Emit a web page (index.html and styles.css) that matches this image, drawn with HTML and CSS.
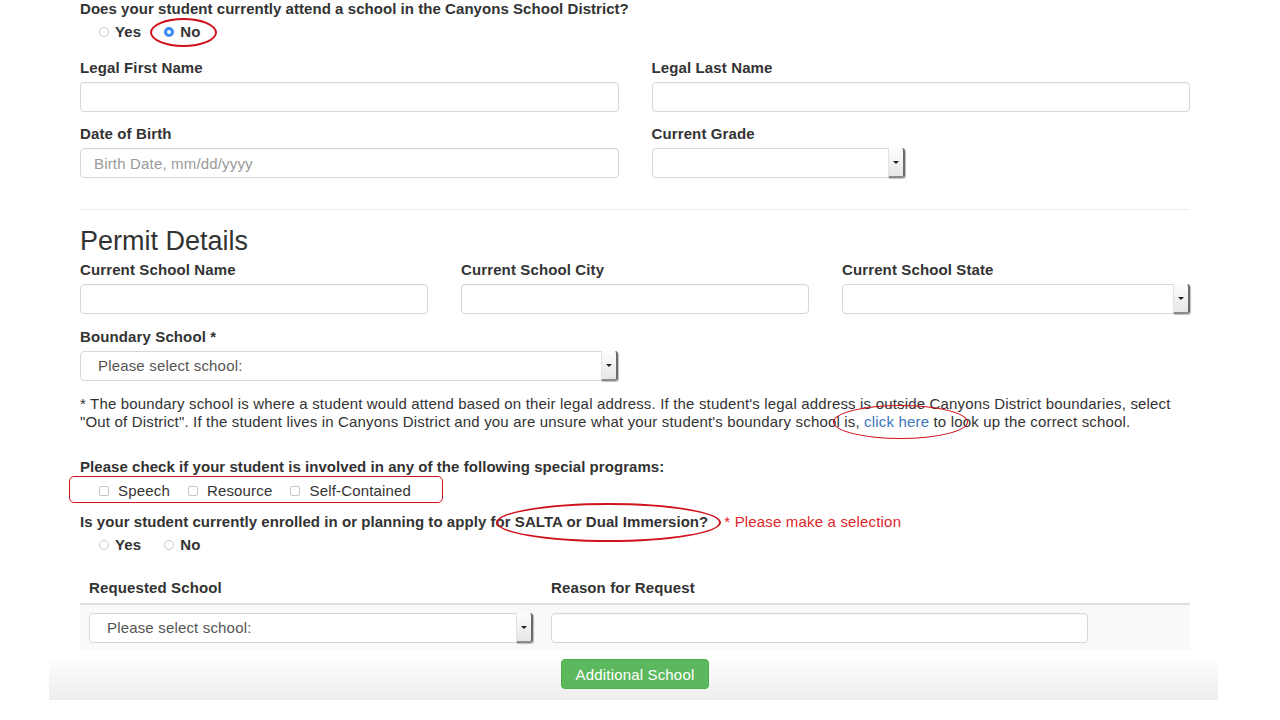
FILE: index.html
```html
<!DOCTYPE html>
<html>
<head>
<meta charset="utf-8">
<title>Permit Request</title>
<link rel="stylesheet" href="styles.css">
</head>
<body>
<div class="panel">
  <div class="q">Does your student currently attend a school in the Canyons School District?</div>
  <div class="radios">
    <label class="opt"><span class="radio"></span>Yes</label>
    <label class="opt"><span class="radio on"></span>No</label>
  </div>

  <div class="row2 first">
    <div class="field"><div class="lbl">Legal First Name</div><input class="input" type="text"></div>
    <div class="field"><div class="lbl">Legal Last Name</div><input class="input" type="text"></div>
  </div>
  <div class="row2 second">
    <div class="field"><div class="lbl">Date of Birth</div><input class="input" type="text" placeholder="Birth Date, mm/dd/yyyy"></div>
    <div class="field"><div class="lbl">Current Grade</div>
      <div class="select grade"><span class="val"></span><span class="arrow"><i></i></span></div>
    </div>
  </div>

  <div class="rule"></div>
  <h2>Permit Details</h2>

  <div class="row3">
    <div class="field"><div class="lbl">Current School Name</div><input class="input" type="text"></div>
    <div class="field"><div class="lbl">Current School City</div><input class="input" type="text"></div>
    <div class="field"><div class="lbl">Current School State</div>
      <div class="select"><span class="val"></span><span class="arrow"><i></i></span></div>
    </div>
  </div>

  <div class="boundary">
    <div class="lbl">Boundary School *</div>
    <div class="select half"><span class="val">Please select school:</span><span class="arrow"><i></i></span></div>
  </div>

  <p class="note">* The boundary school is where a student would attend based on their legal address. If the student's legal address is outside Canyons District boundaries, select<br>"Out of District". If the student lives in Canyons District and you are unsure what your student's boundary school is, <a href="#">click here</a> to look up the correct school.</p>

  <div class="q programs">Please check if your student is involved in any of the following special programs:</div>
  <div class="checks">
    <label class="chk"><span class="box"></span>Speech</label>
    <label class="chk"><span class="box"></span>Resource</label>
    <label class="chk"><span class="box"></span>Self-Contained</label>
  </div>

  <div class="q salta">Is your student currently enrolled in or planning to apply for SALTA or Dual Immersion?<span class="err">* Please make a selection</span></div>
  <div class="radios">
    <label class="opt"><span class="radio"></span>Yes</label>
    <label class="opt"><span class="radio"></span>No</label>
  </div>

  <table class="req">
    <thead>
      <tr><th class="c1">Requested School</th><th>Reason for Request</th></tr>
    </thead>
    <tbody>
      <tr>
        <td class="c1"><div class="select"><span class="val">Please select school:</span><span class="arrow"><i></i></span></div></td>
        <td><input class="input reason" type="text"></td>
      </tr>
    </tbody>
  </table>

  <button class="btn">Additional School</button>
</div>

<div class="mark m-no"></div>
<div class="mark m-click"></div>
<div class="mark m-checks"></div>
<div class="mark m-salta"></div>
</body>
</html>
```

FILE: styles.css
```css
* { box-sizing: border-box; }
html, body { margin: 0; background: #fff; }
body {
  font-family: "Liberation Sans", Arial, Helvetica, sans-serif;
  color: #333;
  font-size: 15px;
  line-height: 18px;
  letter-spacing: 0.17px;
}

.panel {
  margin: 0 62px 0 49px;
  padding: 0 28px 11px 31px;
  background: linear-gradient(to bottom, #fff 0, #fff calc(100% - 44px), #ededed 100%);
}

.lbl, .opt, .req th { letter-spacing: 0.12px; }
.q { font-weight: bold; letter-spacing: 0.05px; }

.radios {
  margin-top: 5px;
  display: flex;
  padding-left: 19px;
  gap: 23px;
  height: 18px;
}
.opt { display: flex; align-items: center; font-weight: bold; }
.radio {
  width: 10px; height: 10px;
  border-radius: 50%;
  border: 1px solid #c9c9c9;
  background: #fff;
  margin-right: 6px;
}
.radio.on { border: 3px solid #3a8bef; }

.row2 {
  display: grid;
  grid-template-columns: 1fr 1fr;
  column-gap: 33px;
}
.row2.first { margin-top: 18px; }
.row2.second { margin-top: 13px; }

.lbl { font-weight: bold; margin-bottom: 5px; }

.input {
  display: block;
  width: 100%;
  height: 30px;
  margin: 0;
  border: 1px solid #d7d7d7;
  border-radius: 4px;
  background: #fff;
  box-shadow: inset 0 1px 1px rgba(0,0,0,0.04);
  font: 15px "Liberation Sans", Arial, sans-serif;
  letter-spacing: 0.17px;
  color: #555;
  padding: 0 13px;
  outline: none;
}
.input::placeholder { color: #9a9a9a; }

.select {
  height: 30px;
  border: 1px solid #d7d7d7;
  border-radius: 4px;
  background: #fff;
  display: flex;
  align-items: stretch;
  color: #555;
}
.select .val { flex: 1; display: flex; align-items: center; padding-left: 17px; }
.select .arrow {
  width: 17px;
  margin: -1px -1px -1px 0;
  background: linear-gradient(to bottom, #fdfdfd, #e6e6e6);
  border-left: 1px solid #e2e2e2;
  border-right: 2px solid #6b6b6b;
  border-bottom: 2px solid #8a8a8a;
  border-radius: 0 3px 3px 0;
  box-shadow: 1px 1px 1px rgba(0,0,0,0.25);
  display: flex;
  align-items: center;
  justify-content: center;
}
.select .arrow i {
  width: 0; height: 0;
  border-left: 3px solid transparent;
  border-right: 3px solid transparent;
  border-top: 3px solid #222;
}
.select.grade { width: 253px; }
.select.half { width: 538px; }

.rule { margin-top: 31px; border-top: 1px solid #ececec; }

h2 {
  margin: 16px 0 0;
  font-size: 27px;
  line-height: 30px;
  font-weight: normal;
  letter-spacing: 0;
}

.row3 {
  margin-top: 5px;
  display: grid;
  grid-template-columns: 1fr 1fr 1fr;
  column-gap: 33px;
}

.boundary { margin-top: 14px; }

.note { margin: 14px 0 0; line-height: 18px; }
.note a { color: #3a78b9; text-decoration: none; }

.programs { margin-top: 27px; }

.checks {
  margin-top: 6px;
  display: flex;
  padding-left: 19px;
  gap: 18px;
  height: 18px;
}
.chk { display: flex; align-items: center; }
.box {
  width: 10px; height: 10px;
  border: 1px solid #c6c6c6;
  border-radius: 2px;
  background: #fff;
  margin-right: 9px;
}

.salta { margin-top: 13px; }
.err { color: #e0262c; font-weight: normal; margin-left: 16px; letter-spacing: 0.17px; }

.req {
  margin-top: 19px;
  width: 100%;
  border-collapse: collapse;
}
.req th {
  text-align: left;
  font-weight: bold;
  height: 31px;
  padding: 0 9px;
  vertical-align: middle;
  border-bottom: 2px solid #dddddd;
}
.req th.c1, .req td.c1 { width: 462px; }
.req td {
  background: #f9f9f9;
  padding: 8px 9px 7px;
}
.req .input.reason { width: 537px; }

.btn {
  display: block;
  margin: 9px auto 0;
  width: 148px;
  height: 30px;
  background: #5cb85c;
  border: 1px solid #4cae4c;
  border-radius: 4px;
  color: #fff;
  font: 15px "Liberation Sans", Arial, sans-serif;
  letter-spacing: 0.17px;
  padding: 0;
}

.mark { position: absolute; border: 2px solid #d0121c; border-radius: 50%; }
.m-no { left: 150px; top: 18px; width: 67px; height: 29px; border-width: 2.5px; }
.m-click { left: 833px; top: 405px; width: 135px; height: 34px; border-width: 1.5px; }
.m-checks { left: 69px; top: 476px; width: 374px; height: 27px; border-radius: 5px; border-width: 1.5px; }
.m-salta { left: 496px; top: 503px; width: 225px; height: 39px; }
```
